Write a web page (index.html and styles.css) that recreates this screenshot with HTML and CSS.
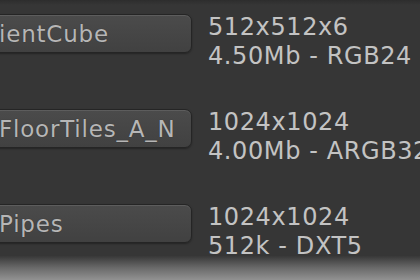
FILE: index.html
```html
<!DOCTYPE html>
<html lang="en">
<head>
    <meta charset="UTF-8">
    <title>Textures</title>
    <link rel="stylesheet" href="styles.css">
</head>
<body>
    <div class="list">
        <div class="row">
            <button class="field">ientCube</button>
            <div class="info">
                <div>512x512x6</div>
                <div>4.50Mb - RGB24</div>
            </div>
        </div>
        <div class="row">
            <button class="field">FloorTiles_A_N</button>
            <div class="info">
                <div>1024x1024</div>
                <div>4.00Mb - ARGB32</div>
            </div>
        </div>
        <div class="row">
            <button class="field">Pipes</button>
            <div class="info">
                <div>1024x1024</div>
                <div>512k - DXT5</div>
            </div>
        </div>
    </div>
    <div class="footer"></div>
</body>
</html>
```

FILE: styles.css
```css
body {
    margin: 0;
    width: 420px;
    height: 280px;
    overflow: hidden;
    background: linear-gradient(#2d2d2d 0px, #363636 5px, #363636 100%);
    font-family: "DejaVu Sans", Verdana, sans-serif;
    display: flex;
    flex-direction: column;
}

.list {
    flex: none;
    height: 243px;
    padding-top: 13px;
    overflow: hidden;
}

.row {
    display: flex;
    align-items: flex-start;
    height: 95px;
}

.field {
    flex: none;
    width: 244px;
    height: 39px;
    margin-left: -52px;
    margin-top: 1px;
    padding: 0 0 0 50px;
    text-align: left;
    font-family: inherit;
    font-size: 23px;
    letter-spacing: 0.8px;
    color: #b6b6b6;
    background: linear-gradient(#4b4b4b, #414141);
    border: 1px solid #252525;
    border-radius: 7px;
    box-shadow: inset 0 1px 0 rgba(255, 255, 255, 0.1), 0 1px 2px rgba(0, 0, 0, 0.35);
    text-shadow: 0 0 1px rgba(0, 0, 0, 0.4);
}

.info {
    margin-left: 16px;
    font-size: 24px;
    line-height: 29px;
    letter-spacing: 0.6px;
    color: #c3c3c3;
    white-space: nowrap;
}

.footer {
    flex: none;
    height: 24px;
    background: linear-gradient(#383838, #6a6a6a 50%, #929292);
}
```
